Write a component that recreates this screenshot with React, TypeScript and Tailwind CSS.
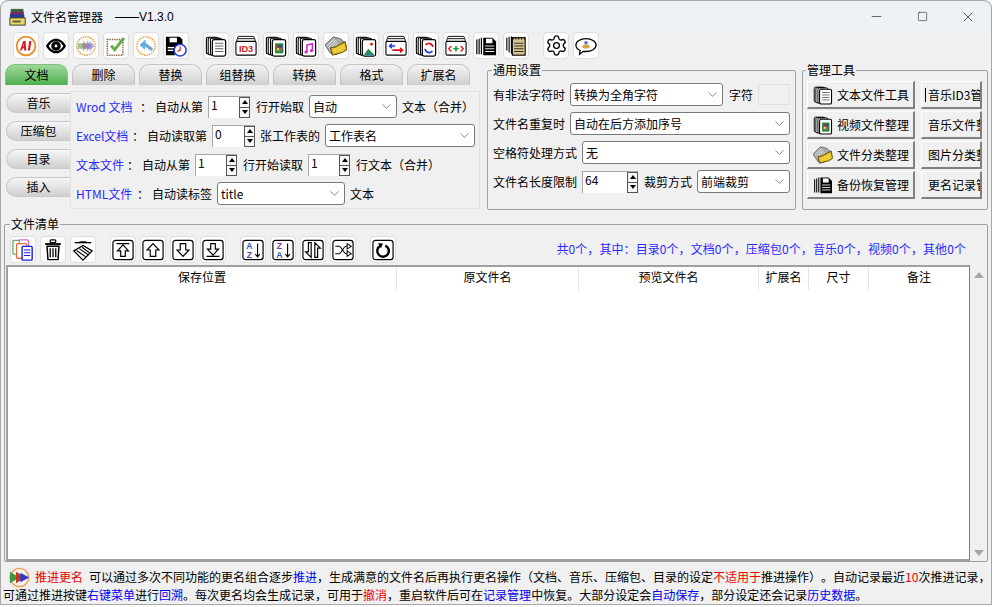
import type { ReactNode } from 'react'
import { ChevronDown, Minus, Settings, Square, X } from 'lucide-react'

const CJK = { fontFamily: '"Noto Sans CJK SC", "Noto Sans", sans-serif' }

// ---- icons ----
function Svg({ children }: { children: ReactNode }) {
  return (
    <svg viewBox="0 0 24 24" className="w-[22px] h-[22px]" fill="none">
      {children}
    </svg>
  )
}

function Stack({ children }: { children?: ReactNode }) {
  return (
    <Svg>
      <rect x="1.5" y="2.5" width="12" height="18" rx="1.5" fill="#fff" stroke="#000" strokeWidth="1.2" />
      <rect x="3.5" y="3" width="12" height="18.5" rx="1.5" fill="#fff" stroke="#000" strokeWidth="1.2" />
      <rect x="6" y="3.5" width="12" height="18.5" rx="1.5" fill="#fff" stroke="#000" strokeWidth="1.2" />
      <rect x="8" y="5" width="14.5" height="18" rx="2" fill="#fff" stroke="#000" strokeWidth="1.3" />
      {children}
    </Svg>
  )
}

const DottedRing = ({ color = '#f09a3e' }: { color?: string }) => (
  <circle cx="12" cy="12" r="10" stroke={color} strokeWidth="1.6" strokeDasharray="1.6 1.1" />
)

const icons: Record<string, ReactNode> = {
  ai: (
    <Svg>
      <circle cx="12" cy="12" r="10.2" fill="#fff" stroke="#f08a24" strokeWidth="2" />
      <path d="M5.5 17 9 6.5h2.5l.8 10.5H10l-.1-2.5H8.3L7.5 17zM9 12.5h.9l-.2-3.2zM14 17l1.6-10.5h2.3L16.3 17z" fill="#e0141c" />
    </Svg>
  ),
  eye: (
    <Svg>
      <path d="M1 12c3-5.500 7-8 11-8s8 2.500 11 8c-3 5.500-7 8-11 8S4 17.500 1 12z" fill="#000" />
      <path d="M4 12c2.200-3.500 5-5.500 8-5.500s5.800 2 8 5.500c-2.200 3.500-5 5.500-8 5.500S6.200 15.500 4 12z" fill="#fff" />
      <circle cx="12" cy="12" r="5.200" fill="#000" />
      <circle cx="12" cy="12" r="1.600" fill="#fff" />
    </Svg>
  ),
  forward: (
    <Svg>
      <DottedRing />
      <path d="M3 9h6v-3l5 6-5 6v-3H3z" fill="#5aa05a" opacity=".6" />
      <path d="M8 9h5V6l5 6-5 6v-3H8z" fill="#b05a7a" opacity=".55" />
      <path d="M13 9h3V6l5 6-5 6v-3h-3z" fill="#5a7ae0" opacity=".6" />
    </Svg>
  ),
  check: (
    <Svg>
      <rect x="2.500" y="5" width="17" height="17" stroke="#8a6a4a" strokeWidth="1.600" strokeDasharray="1.500 1" />
      <path d="M5.500 12.500l5 6L22 4l-3-1.500-8.500 11L8 10.500z" fill="#5fae4a" />
    </Svg>
  ),
  back: (
    <Svg>
      <DottedRing />
      <path d="M5 11l6.500-6v3.500L20 15l-2.500 2.500L11 12.500V16z" fill="#6aa8e0" />
    </Svg>
  ),
  saveClock: (
    <Svg>
      <path d="M1 2h15l3 3v7a7 7 0 0 0-8 10H1z" fill="#000" />
      <rect x="5" y="3" width="8" height="5" fill="#fff" />
      <rect x="3" y="13" width="7" height="1.500" fill="#fff" />
      <rect x="3" y="16" width="6" height="1.500" fill="#fff" />
      <circle cx="16.500" cy="16.500" r="6.500" fill="#fff" stroke="#1a3ae0" strokeWidth="1.600" />
      <path d="M16.500 12.500v4l-3 1.500" stroke="#e01414" strokeWidth="1.300" />
    </Svg>
  ),
  text: (
    <Stack>
      <path d="M11 9h9M11 12h9M11 15h9M11 18h9" stroke="#555" strokeWidth="1" />
    </Stack>
  ),
  id3: (
    <Svg>
      <rect x="3" y="1.500" width="18" height="6" rx="1" fill="#fff" stroke="#000" />
      <rect x="2" y="4" width="20" height="6" rx="1" fill="#fff" stroke="#000" />
      <rect x="1" y="7" width="22" height="15" rx="1.500" fill="#fff" stroke="#000" strokeWidth="1.200" />
      <text x="12" y="19" textAnchor="middle" fontSize="10" fontWeight="700" fill="#d8181c" fontFamily="Liberation Sans, sans-serif">ID3</text>
    </Svg>
  ),
  video: (
    <Stack>
      <rect x="11" y="9" width="9" height="11" fill="#2a8a3a" />
      <rect x="13" y="11" width="2.500" height="3" fill="#e01414" />
      <rect x="15.500" y="11" width="2.500" height="3" fill="#1a3ae0" />
      <rect x="13" y="14" width="2.500" height="3" fill="#f0d020" />
      <rect x="15.500" y="14" width="2.500" height="3" fill="#e040a0" />
    </Stack>
  ),
  music: (
    <Stack>
      <path d="M13 18.500V11l6-1.500v7.500" stroke="#d818d8" strokeWidth="1.600" />
      <circle cx="12" cy="18.500" r="1.700" fill="#d818d8" />
      <circle cx="18" cy="17" r="1.700" fill="#d818d8" />
    </Stack>
  ),
  folder: (
    <Svg>
      <path d="M0 11 9 2l8 2 5 5-9 12-7-1z" fill="#a8a8a8" stroke="#444" strokeWidth=".8" />
      <path d="M2 12l8-8M3.500 14l8-8.500M5 16l8-9M6.500 18l8-9" stroke="#eee" strokeWidth="1" />
      <path d="M8 22 6 14l5-1 11-6 2 9-5 3z" fill="#c79f10" stroke="#5a4500" strokeWidth="1" />
      <path d="M9 20.500 7.500 15l4-.8 9.500-5 1.500 6.300-4 2.700z" fill="#efcb3a" />
    </Svg>
  ),
  image: (
    <Stack>
      <rect x="10" y="8" width="11" height="13" fill="#fff" />
      <circle cx="18" cy="10" r="1.500" fill="#e01414" />
      <path d="M9.500 22l5-7 3 3 4 4z" fill="#1d8f4a" />
      <path d="M13 22l2-3 3 3z" fill="#1a8ae0" />
    </Stack>
  ),
  swap: (
    <Svg>
      <rect x="3" y="1.500" width="18" height="6" rx="1" fill="#fff" stroke="#000" />
      <rect x="2" y="4" width="20" height="6" rx="1" fill="#fff" stroke="#000" />
      <rect x="1" y="7" width="22" height="15" rx="1.500" fill="#fff" stroke="#000" strokeWidth="1.200" />
      <path d="M11 12H5m2.500-2.500L5 12l2.500 2.500" stroke="#1a3ae0" strokeWidth="1.600" />
      <path d="M8 16.500h11M16.500 14l2.500 2.500L16.500 19" stroke="#e01414" strokeWidth="1.800" />
    </Svg>
  ),
  refresh: (
    <Stack>
      <path d="M19.500 13a4.500 4.500 0 0 0-8-2" stroke="#e01414" strokeWidth="1.800" />
      <path d="M11 15a4.500 4.500 0 0 0 8 2.500" stroke="#1a3ae0" strokeWidth="1.800" />
    </Stack>
  ),
  code: (
    <Svg>
      <rect x="3" y="1.500" width="18" height="6" rx="1" fill="#fff" stroke="#000" />
      <rect x="2" y="4" width="20" height="6" rx="1" fill="#fff" stroke="#000" />
      <rect x="1" y="7" width="22" height="15" rx="1.500" fill="#fff" stroke="#000" strokeWidth="1.200" />
      <path d="M7 12l-3 3 3 3M17 12l3 3-3 3" stroke="#e01414" strokeWidth="1.400" />
      <path d="M12 12v6M9 15h6" stroke="#1d9f3a" strokeWidth="1.800" />
    </Svg>
  ),
  backup: (
    <Svg>
      <path d="M2 5v16M4.500 4v17M7 3v18" stroke="#000" strokeWidth="1.300" />
      <path d="M9 3h10l4 4v15H9z" fill="#000" />
      <rect x="12" y="4" width="7" height="5" fill="#fff" />
      <path d="M11 12h10M11 15h10M11 18h10" stroke="#fff" strokeWidth="1" />
    </Svg>
  ),
  note: (
    <Svg>
      <path d="M2 3v14M4.500 2v17M7 1.500v19" stroke="#000" strokeWidth="1.200" />
      <rect x="8" y="3" width="14" height="19" fill="#d8c490" stroke="#000" strokeWidth="1.200" />
      <path d="M9 2v3M12 2v3M15 2v3M18 2v3M21 2v3" stroke="#000" />
      <path d="M10 9h10M10 12h10M10 15h10M10 18h10" stroke="#222" />
    </Svg>
  ),
  gear: <Settings size={23} strokeWidth={1.4} color="#000" />,
  chat: (
    <Svg>
      <path d="M12 4c6 0 11 2.800 11 7s-5 7-11 7c-1 0-2 0-3-.2L5 21l.5-4C3 15.700 1 13.500 1 11c0-4.200 5-7 11-7z" fill="#fff" stroke="#000" strokeWidth="1.400" />
      <circle cx="12" cy="8.500" r="2" fill="#6a6ae0" />
      <ellipse cx="12" cy="12.500" rx="4" ry="2.200" fill="#e0a040" />
    </Svg>
  ),
  copy: (
    <Svg>
      <rect x="1" y="1.500" width="11" height="15" rx="1" fill="#fff" stroke="#5fb05f" strokeWidth="1.400" />
      <rect x="8" y="1" width="10" height="14" rx="1" fill="#fff" stroke="#d070d0" strokeWidth="1.400" />
      <rect x="5" y="5" width="11" height="16" rx="1" fill="#fff" stroke="#e07040" strokeWidth="1.400" />
      <rect x="11" y="8" width="11" height="15" rx="1" fill="#fff" stroke="#1a1ae0" strokeWidth="1.500" />
      <path d="M13 12h7M13 15h7M13 18h7" stroke="#1a1ae0" strokeWidth="1.300" />
    </Svg>
  ),
  trash: (
    <Svg>
      <rect x="9" y="1" width="6" height="3" rx="1" stroke="#000" strokeWidth="1.300" />
      <path d="M3.500 4.500h17v2h-17z" fill="#000" />
      <path d="M5.500 8h13l-1 14.500h-11z" stroke="#000" strokeWidth="1.600" />
      <path d="M9 10v10M12 10v10M15 10v10" stroke="#000" strokeWidth="1.400" />
    </Svg>
  ),
  clear: (
    <Svg>
      <path d="M7 4c0-2 10-2 10 0z" fill="#000" />
      <path d="M3 4h18" stroke="#000" strokeWidth="1.400" />
      <path d="M2 13l10-6 10 6-10 10z" fill="#fff" stroke="#000" strokeWidth="1.400" />
      <path d="M5 12.500l10 7M8 10.500l10 7M11 9l8 6" stroke="#000" strokeWidth="1.200" />
    </Svg>
  ),
  top: (
    <Svg>
      <rect x="1" y="1.500" width="22" height="21" rx="3" fill="#fff" stroke="#000" strokeWidth="1.300" />
      <path d="M5 5h14M12 6.500l6 6.500h-3.500v6h-5v-6H6z" stroke="#000" strokeWidth="1.300" />
    </Svg>
  ),
  up: (
    <Svg>
      <rect x="1" y="1.500" width="22" height="21" rx="3" fill="#fff" stroke="#000" strokeWidth="1.300" />
      <path d="M12 5l6.500 7H15v7H9v-7H5.500z" stroke="#000" strokeWidth="1.300" />
    </Svg>
  ),
  down: (
    <Svg>
      <rect x="1" y="1.500" width="22" height="21" rx="3" fill="#fff" stroke="#000" strokeWidth="1.300" />
      <path d="M12 19l6.500-7H15V5H9v7H5.500z" stroke="#000" strokeWidth="1.300" />
    </Svg>
  ),
  bottom: (
    <Svg>
      <rect x="1" y="1.500" width="22" height="21" rx="3" fill="#fff" stroke="#000" strokeWidth="1.300" />
      <path d="M5 19h14M12 17.500l6-6.500h-3.500V5h-5v6H6z" stroke="#000" strokeWidth="1.300" />
    </Svg>
  ),
  az: (
    <Svg>
      <rect x="1" y="1.500" width="22" height="21" rx="3" fill="#fff" stroke="#000" strokeWidth="1.300" />
      <text x="8" y="11" textAnchor="middle" fontSize="9.500" fontWeight="700" fill="#2a5ab0" fontFamily="Liberation Sans, sans-serif">A</text>
      <text x="8" y="20.500" textAnchor="middle" fontSize="9.500" fontWeight="700" fill="#7a3ab0" fontFamily="Liberation Sans, sans-serif">Z</text>
      <path d="M17 5v14M14.500 16.500 17 19.500l2.500-3" stroke="#000" strokeWidth="1.200" />
    </Svg>
  ),
  za: (
    <Svg>
      <rect x="1" y="1.500" width="22" height="21" rx="3" fill="#fff" stroke="#000" strokeWidth="1.300" />
      <text x="8" y="11" textAnchor="middle" fontSize="9.500" fontWeight="700" fill="#7a3ab0" fontFamily="Liberation Sans, sans-serif">Z</text>
      <text x="8" y="20.500" textAnchor="middle" fontSize="9.500" fontWeight="700" fill="#2a5ab0" fontFamily="Liberation Sans, sans-serif">A</text>
      <path d="M17 5v14M14.500 16.500 17 19.500l2.500-3" stroke="#000" strokeWidth="1.200" />
    </Svg>
  ),
  reverse: (
    <Svg>
      <rect x="1" y="1.500" width="22" height="21" rx="3" fill="#fff" stroke="#000" strokeWidth="1.300" />
      <path d="M10 4v16L4 14h3V4zM14 20V4l6 6h-3v10z" stroke="#000" strokeWidth="1.300" />
    </Svg>
  ),
  shuffle: (
    <Svg>
      <rect x="1" y="1.500" width="22" height="21" rx="3" fill="#fff" stroke="#000" strokeWidth="1.300" />
      <path d="M3.500 8h4c3 0 5 8 8 8h1M3.500 16h4c3 0 5-8 8-8h1" stroke="#000" strokeWidth="1.100" />
      <path d="M16.500 5l4.500 3-4.500 3zM16.500 13l4.500 3-4.500 3z" fill="#fff" stroke="#000" strokeWidth="1.100" />
    </Svg>
  ),
  redo: (
    <Svg>
      <rect x="1" y="1.500" width="22" height="21" rx="3" fill="#fff" stroke="#000" strokeWidth="1.300" />
      <path d="M14.500 7.200a6.300 6.300 0 1 1-5.500.3" stroke="#000" strokeWidth="2.600" />
      <path d="M6.500 4.500l5.500.3-2.200 5.200z" fill="#000" />
    </Svg>
  ),
  push: (
    <svg viewBox="0 0 24 24" className="w-[21px] h-[21px]" fill="none">
      <circle cx="12" cy="12" r="10.500" stroke="#f09a3e" strokeWidth="1.500" />
      <path d="M1 5.500 12 12 1 18.500z" fill="#3f9a3f" />
      <path d="M8 5.500 19 12 8 18.500z" fill="#c0392b" />
      <path d="M13 6.500 23 12l-10 5.500z" fill="#2a3ad0" />
    </svg>
  ),
}

// ---- controls ----
function IconBtn({ name, className = '' }: { name: string; className?: string }) {
  return (
    <div className={`w-[26px] h-[27px] shrink-0 flex items-center justify-center rounded-[4px] bg-[#fdfdfd] border border-[#dedede] ${className}`}>
      {icons[name]}
    </div>
  )
}

function Select({ value, className }: { value: string; className: string }) {
  return (
    <div className={`h-[23px] shrink-0 flex items-center justify-between bg-white border border-[#7a7a7a] rounded-[3px] pl-[3px] pr-[2px] ${className}`}>
      <span className="truncate">{value}</span>
      <ChevronDown size={15} strokeWidth={1} color="#444" />
    </div>
  )
}

function Spin({ value, className }: { value: string; className: string }) {
  return (
    <div className={`h-[22px] shrink-0 flex bg-white pl-[2px] border-l border-t border-[#a8a8a8] ${className}`}>
      <span className="flex-1">{value}</span>
      <div className="w-[11px] flex flex-col border border-[#555] bg-[#f6f6f6]">
        <div className="flex-1 flex items-center justify-center border-b border-[#555]">
          <div className="w-0 h-0 border-x-[3px] border-x-transparent border-b-[4px] border-b-black" />
        </div>
        <div className="flex-1 flex items-center justify-center">
          <div className="w-0 h-0 border-x-[3px] border-x-transparent border-t-[4px] border-t-black" />
        </div>
      </div>
    </div>
  )
}

function Group({ title, className, legend, children }: { title: string; className: string; legend: string; children: ReactNode }) {
  return (
    <div className={`relative border border-[#a0a0a0] rounded-[2px] ${className}`}>
      <span className={`absolute top-[-9px] px-px bg-[#f0f0f0] leading-[16px] ${legend}`}>{title}</span>
      {children}
    </div>
  )
}

function Tool({ label, icon, clip, sliver }: { label: string; icon?: string; clip?: boolean; sliver?: boolean }) {
  return (
    <div
      className={`h-[28px] flex items-center overflow-hidden whitespace-nowrap bg-[#f0f0f0] border-t border-l border-t-white border-l-white border-b-2 border-r-2 border-b-[#808080] border-r-[#808080] ${
        clip ? 'w-[61px] pl-[6px]' : 'w-[108px] pl-[5px]'
      }`}
    >
      {sliver && <span className="w-[1px] h-[14px] mr-[2px] shrink-0 -ml-[3px] bg-black" />}
      {icon && <span className="w-[24px] h-[22px] shrink-0 scale-90 origin-left">{icons[icon]}</span>}
      {label}
    </div>
  )
}

const tabs = ['文档', '删除', '替换', '组替换', '转换', '格式', '扩展名']
const sideTabs = ['音乐', '压缩包', '目录', '插入']
const tops = ['ai', 'eye', 'forward', 'check', 'back', 'saveClock']
const mids = ['text', 'id3', 'video', 'music', 'folder', 'image', 'swap', 'refresh', 'code', 'backup', 'note']

const columns = [
  { name: '保存位置', w: 'w-[389px]' },
  { name: '原文件名', w: 'w-[182px]' },
  { name: '预览文件名', w: 'w-[180px]' },
  { name: '扩展名', w: 'w-[50px]' },
  { name: '尺寸', w: 'w-[60px]' },
  { name: '备注', w: 'w-[100px]' },
]

export default function App() {
  return (
    <div style={CJK} className="w-[992px] h-[607px] overflow-hidden bg-white text-[12px] leading-[16px] text-black [text-spacing-trim:space-all]">
      <div className="h-[605px] flex flex-col bg-[#f0f0f0] border-x border-b border-[#a8a8a8] rounded-t-[8px]">
        {/* Title bar */}
        <div className="h-[32px] shrink-0 flex items-center bg-[#eef2f6] border-t border-[#a8a8a8] rounded-t-[8px]">
          <svg viewBox="0 0 20 20" className="w-[18px] h-[18px] ml-[8px] mr-[4px]">
            <rect x="2" y="1" width="14" height="4" fill="#3a6a3a" />
            <rect x="1.500" y="4" width="15" height="4" fill="#7a2a6a" />
            <rect x="1" y="7" width="16" height="4" fill="#2a3a8a" />
            <rect x="1" y="11" width="17" height="8" fill="#e8d860" stroke="#333" strokeWidth="1" />
            <rect x="4" y="14" width="9" height="2" fill="#555" />
          </svg>
          <span>文件名管理器</span>
          <span className="ml-[12px] font-['Liberation_Sans',sans-serif]">——V1.3.0</span>
          <div className="ml-auto flex items-center">
            <div className="w-[46px] flex justify-center"><Minus size={15} strokeWidth={1} color="#111" /></div>
            <div className="w-[46px] flex justify-center"><Square size={11} strokeWidth={1.2} color="#111" /></div>
            <div className="w-[46px] flex justify-center"><X size={16} strokeWidth={1} color="#111" /></div>
          </div>
        </div>

        {/* Main toolbar */}
        <div className="h-[30px] shrink-0 flex pl-[12px] gap-[4px]">
          {tops.map((n) => <IconBtn key={n} name={n} />)}
          <div className="w-[6px]" />
          {mids.map((n) => <IconBtn key={n} name={n} />)}
          <div className="w-[6px]" />
          <IconBtn name="gear" />
          <IconBtn name="chat" />
        </div>

        {/* Settings */}
        <div className="h-[162px] shrink-0 flex">
          <div className="w-[476px] ml-[4px] pt-[2px] shrink-0">
            <div className="h-[21px] flex gap-[4px]">
              {tabs.map((t, i) => (
                <div
                  key={t}
                  className={`w-[63px] pb-px flex items-center justify-center rounded-t-[10px] border-t border-x ${
                    i === 0
                      ? 'bg-gradient-to-b from-[#9fd89a] to-[#4caf50] border-[#7cc07c]'
                      : 'bg-gradient-to-b from-[#f4f4f4] to-[#cfcfcf] border-[#c4c4c4]'
                  }`}
                >
                  {t}
                </div>
              ))}
            </div>
            <div className="flex mt-[6px]">
              <div className="w-[64px] ml-px pt-[2px] flex flex-col gap-[8px] shrink-0">
                {sideTabs.map((t) => (
                  <div
                    key={t}
                    className="h-[20px] pb-px flex items-center justify-center rounded-l-[10px] border-y border-l border-[#c8c8c8] bg-gradient-to-b from-[#f6f6f6] to-[#d0d0d0]"
                  >
                    {t}
                  </div>
                ))}
              </div>
              <div className="w-[410px] h-[118px] border border-[#e2e2e2] pl-[5px]">
                <div className="h-[29px] flex items-center">
                  <span className="w-[61px] text-[#2a2aff]">Wrod 文档</span>
                  <span className="w-[18px] text-center">：</span>
                  <span className="w-[48px]">自动从第</span>
                  <Spin value="1" className="w-[42px] ml-[5px]" />
                  <span className="ml-[6px]">行开始取</span>
                  <Select value="自动" className="w-[88px] ml-[5px]" />
                  <span className="ml-[5px]">文本（合并）</span>
                </div>
                <div className="h-[29px] flex items-center">
                  <span className="w-[53px] text-[#2a2aff]">Excel文档</span>
                  <span className="w-[18px] text-center">：</span>
                  <span className="w-[60px]">自动读取第</span>
                  <Spin value="0" className="w-[43px] ml-[5px]" />
                  <span className="ml-[5px]">张工作表的</span>
                  <Select value="工作表名" className="w-[150px] ml-[5px]" />
                </div>
                <div className="h-[29px] flex items-center">
                  <span className="w-[48px] text-[#2a2aff]">文本文件</span>
                  <span className="w-[18px] text-center">：</span>
                  <span className="w-[48px]">自动从第</span>
                  <Spin value="1" className="w-[42px] ml-[5px]" />
                  <span className="ml-[6px]">行开始读取</span>
                  <Spin value="1" className="w-[42px] ml-[5px]" />
                  <span className="ml-[6px]">行文本（合并）</span>
                </div>
                <div className="h-[29px] flex items-center">
                  <span className="w-[58px] text-[#2a2aff]">HTML文件</span>
                  <span className="w-[18px] text-center">：</span>
                  <span className="w-[60px]">自动读标签</span>
                  <Select value="title" className="w-[128px] ml-[5px]" />
                  <span className="ml-[5px]">文本</span>
                </div>
              </div>
            </div>
          </div>

          <Group title="通用设置" legend="left-[4px]" className="w-[309px] h-[140px] ml-[6px] mt-[8px] pl-[5px] pt-[9px] shrink-0">
            <div className="h-[29px] flex items-center">
              <span className="w-[72px]">有非法字符时</span>
              <Select value="转换为全角字符" className="w-[153px] ml-[5px]" />
              <span className="ml-[6px]">字符</span>
              <div className="w-[32px] h-[21px] ml-[5px] border border-[#e0e0e0] bg-[#f0f0f0]" />
            </div>
            <div className="h-[29px] flex items-center">
              <span className="w-[72px]">文件名重复时</span>
              <Select value="自动在后方添加序号" className="w-[220px] ml-[5px]" />
            </div>
            <div className="h-[29px] flex items-center">
              <span className="w-[84px]">空格符处理方式</span>
              <Select value="无" className="w-[208px] ml-[5px]" />
            </div>
            <div className="h-[29px] flex items-center">
              <span className="w-[84px]">文件名长度限制</span>
              <Spin value="64" className="w-[56px] ml-[5px]" />
              <span className="ml-[6px]">裁剪方式</span>
              <Select value="前端裁剪" className="w-[93px] ml-[5px]" />
            </div>
          </Group>

          <Group title="管理工具" legend="left-[3px]" className="w-[186px] h-[140px] ml-[6px] mt-[8px] pl-[4px] pt-[10px] shrink-0">
            <div className="flex gap-[6px]">
              <div className="flex flex-col gap-[2px]">
                <Tool label="文本文件工具" icon="text" />
                <Tool label="视频文件整理" icon="video" />
                <Tool label="文件分类整理" icon="folder" />
                <Tool label="备份恢复管理" icon="backup" />
              </div>
              <div className="flex flex-col gap-[2px]">
                <Tool label="音乐ID3管理" clip sliver />
                <Tool label="音乐文件整理" clip />
                <Tool label="图片分类整理" clip />
                <Tool label="更名记录管理" clip />
              </div>
            </div>
          </Group>
        </div>

        {/* File list */}
        <Group title="文件清单" legend="left-[5px]" className="w-[984px] h-[338px] ml-[3px] shrink-0 flex flex-col">
          <div className="h-[40px] shrink-0 pt-[11px] pl-[5px] flex items-start">
            <div className="flex gap-[4px]">
              <IconBtn name="copy" />
              <IconBtn name="trash" />
              <IconBtn name="clear" />
            </div>
            <div className="flex gap-[4px] ml-[14px]">
              <IconBtn name="top" />
              <IconBtn name="up" />
              <IconBtn name="down" />
              <IconBtn name="bottom" />
            </div>
            <div className="flex gap-[4px] ml-[14px]">
              <IconBtn name="az" />
              <IconBtn name="za" />
              <IconBtn name="reverse" />
              <IconBtn name="shuffle" />
            </div>
            <IconBtn name="redo" className="ml-[14px]" />
            <span className="ml-auto mr-[21px] mt-[5px] text-[#2a2aff] whitespace-nowrap tracking-[0.08px]">共0个，其中：目录0个，文档0个，压缩包0个，音乐0个，视频0个，其他0个</span>
          </div>
          <div className="flex-1 flex">
            <div className="w-[964px] ml-px bg-white border-t-2 border-l-2 border-[#a0a0a0] border-b-2 border-b-[#a0a0a0] border-r border-r-[#808080]">
              <div className="h-[23px] flex">
                {columns.map((c) => (
                  <div key={c.name} className={`${c.w} shrink-0 pt-[2px] text-center border-r border-[#e5e5e5] last:border-r-0`}>
                    {c.name}
                  </div>
                ))}
              </div>
            </div>
            <div className="w-[18px] flex flex-col justify-between items-center pt-[7px] pb-[5px]">
              <div className="w-0 h-0 border-x-[5px] border-x-transparent border-b-[6px] border-b-[#a6a6a6]" />
              <div className="w-0 h-0 border-x-[5px] border-x-transparent border-t-[6px] border-t-[#a6a6a6]" />
            </div>
          </div>
        </Group>

        {/* Tips */}
        <div className="flex-1 pl-[2px] pt-[6px] leading-[18px] whitespace-nowrap overflow-hidden">
          <div className="h-[18px] flex items-center">
            <span className="ml-[6px] mr-[5px] w-[21px] h-[21px]">{icons.push}</span>
            <span className="text-[#f00000]">推进更名</span>
            <span className="ml-[6px]">
              可以通过多次不同功能的更名组合逐步<span className="text-[#0000f0]">推进</span>，生成满意的文件名后再执行更名操作（文档、音乐、压缩包、目录的设定<span className="text-[#f00000]">不适用于</span>推进操作）。自动记录最近<span className="text-[#f00000]">10</span>次推进记录，
            </span>
          </div>
          <div className="h-[18px]">
            可通过推进按键<span className="text-[#0000f0]">右键菜单</span>进行<span className="text-[#0000f0]">回溯</span>。每次更名均会生成记录，可用于<span className="text-[#f00000]">撤消</span>，重启软件后可在<span className="text-[#0000f0]">记录管理</span>中恢复。大部分设定会<span className="text-[#0000f0]">自动保存</span>，部分设定还会记录<span className="text-[#0000f0]">历史数据</span>。
          </div>
        </div>
      </div>
    </div>
  )
}
